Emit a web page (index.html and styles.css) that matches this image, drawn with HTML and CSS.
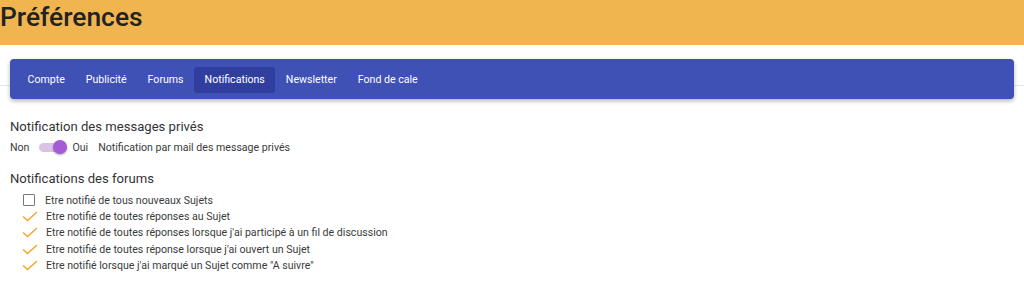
FILE: index.html
```html
<!DOCTYPE html>
<html lang="fr">
<head>
    <meta charset="UTF-8">
    <meta name="viewport" content="width=device-width, initial-scale=1.0">
    <title>Préférences</title>
    <link rel="stylesheet" href="styles.css">
</head>
<body>
    <header class="page-header">
        <h1>Préférences</h1>
    </header>

    <div class="tabs-wrap">
        <nav class="tabs">
            <a class="tab">Compte</a>
            <a class="tab">Publicité</a>
            <a class="tab">Forums</a>
            <a class="tab active">Notifications</a>
            <a class="tab">Newsletter</a>
            <a class="tab">Fond de cale</a>
        </nav>
    </div>

    <section class="block">
        <h2>Notification des messages privés</h2>
        <div class="switch-row">
            <span>Non</span>
            <span class="switch"><span class="track"></span><span class="thumb"></span></span>
            <span>Oui</span>
            <span class="switch-label">Notification par mail des message privés</span>
        </div>
    </section>

    <section class="block">
        <h2>Notifications des forums</h2>
        <ul class="checks">
            <li><span class="box"></span>Etre notifié de tous nouveaux Sujets</li>
            <li><span class="tick"><svg width="16" height="11" viewBox="0 0 16 11"><path d="M1 5.5 L5.5 9.5 L15 1" fill="none" stroke="#f5a623" stroke-width="1.4"/></svg></span>Etre notifié de toutes réponses au Sujet</li>
            <li><span class="tick"><svg width="16" height="11" viewBox="0 0 16 11"><path d="M1 5.5 L5.5 9.5 L15 1" fill="none" stroke="#f5a623" stroke-width="1.4"/></svg></span>Etre notifié de toutes réponses lorsque j'ai participé à un fil de discussion</li>
            <li><span class="tick"><svg width="16" height="11" viewBox="0 0 16 11"><path d="M1 5.5 L5.5 9.5 L15 1" fill="none" stroke="#f5a623" stroke-width="1.4"/></svg></span>Etre notifié de toutes réponse lorsque j'ai ouvert un Sujet</li>
            <li><span class="tick"><svg width="16" height="11" viewBox="0 0 16 11"><path d="M1 5.5 L5.5 9.5 L15 1" fill="none" stroke="#f5a623" stroke-width="1.4"/></svg></span>Etre notifié lorsque j'ai marqué un Sujet comme "A suivre"</li>
        </ul>
    </section>
</body>
</html>
```

FILE: styles.css
```css
body {
    margin: 0;
    font-family: Roboto, "Liberation Sans", sans-serif;
    color: #333;
    background: #fff;
}
.page-header {
    background-color: #f1b54f;
    height: 45px;
}
.page-header h1 {
    margin: 0;
    font-size: 26.4px;
    font-weight: 500;
    line-height: 34px;
    color: #222;
}
.tabs-wrap {
    padding: 14px 10px 0;
    background: linear-gradient(to bottom, transparent 40px, #e8e8e8 40px, #e8e8e8 41px, transparent 41px);
}
.tabs {
    display: flex;
    align-items: center;
    height: 40px;
    padding: 0 7px;
    background-color: #3f51b5;
    border-radius: 4px;
    box-shadow: 0 2px 4px rgba(0, 0, 0, 0.3);
}
.tab {
    color: #fff;
    font-size: 10.6px;
    line-height: 26px;
    padding: 0 10.5px;
    border-radius: 3px;
    margin-top: 1px;
}
.tab.active {
    background-color: #303f9f;
}
.block {
    padding: 0 10px;
}
.block h2 {
    margin: 0;
    font-size: 13.1px;
    font-weight: 400;
    color: #333;
}
.block:first-of-type h2 {
    margin-top: 19px;
    line-height: 18px;
}
.block + .block h2 {
    margin-top: 12px;
    line-height: 18px;
}
.switch-row {
    display: flex;
    align-items: center;
    font-size: 10.6px;
    height: 22px;
    color: #3a3a3a;
}
.switch {
    position: relative;
    width: 30px;
    height: 16px;
    margin: 0 3px 0 10px;
}
.switch .track {
    position: absolute;
    left: 0;
    top: 4px;
    width: 28px;
    height: 9px;
    border-radius: 5px;
    background-color: #dbc3e8;
}
.switch .thumb {
    position: absolute;
    left: 14px;
    top: 1px;
    width: 14px;
    height: 14px;
    border-radius: 50%;
    background-color: #a55ad6;
    box-shadow: 0 1px 2px rgba(0, 0, 0, 0.35);
}
.switch-label {
    margin-left: 10px;
}
.checks {
    list-style: none;
    margin: 4px 0 0;
    padding: 0 0 0 12px;
    font-size: 10.6px;
    color: #3a3a3a;
}
.checks li {
    display: flex;
    align-items: center;
    height: 16.4px;
}
.box {
    width: 10px;
    height: 10px;
    border: 1.5px solid #777;
    border-radius: 1px;
    margin: 0 10px 0 1px;
}
.tick {
    display: flex;
    width: 16px;
    margin-right: 8px;
}
```
